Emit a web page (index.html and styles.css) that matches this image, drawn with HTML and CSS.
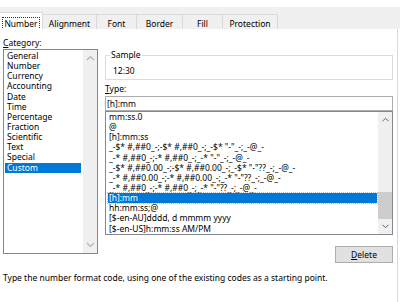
FILE: index.html
```html
<!DOCTYPE html>
<html lang="en">
<head>
  <meta charset="UTF-8">
  <title>Format Cells</title>
  <link rel="stylesheet" href="styles.css">
</head>
<body>
  <div class="dialog">
    <div class="tabs">
      <div class="tab active"><span class="focus">Number</span></div>
      <div class="tab">Alignment</div>
      <div class="tab">Font</div>
      <div class="tab">Border</div>
      <div class="tab">Fill</div>
      <div class="tab">Protection</div>
    </div>

    <div class="panel">
      <div class="columns">
        <div class="left">
          <div class="label"><u>C</u>ategory:</div>
          <div class="listbox category">
            <ul class="items">
              <li>General</li>
              <li>Number</li>
              <li>Currency</li>
              <li>Accounting</li>
              <li>Date</li>
              <li>Time</li>
              <li>Percentage</li>
              <li>Fraction</li>
              <li>Scientific</li>
              <li>Text</li>
              <li>Special</li>
              <li class="selected">Custom</li>
            </ul>
            <div class="scrollbar light">
              <svg class="arrow" width="9" height="6" viewBox="0 0 9 6"><path d="M1 5 L4.5 1.5 L8 5" fill="none" stroke="currentColor" stroke-width="1.2"/></svg>
              <div class="track"></div>
              <svg class="arrow" width="9" height="6" viewBox="0 0 9 6"><path d="M1 1 L4.5 4.5 L8 1" fill="none" stroke="currentColor" stroke-width="1.2"/></svg>
            </div>
          </div>
        </div>

        <div class="right">
          <fieldset class="sample">
            <legend>Sample</legend>
            <div class="sample-value">12:30</div>
          </fieldset>

          <div class="label"><u>T</u>ype:</div>
          <div class="type-input">[h]:mm</div>
          <div class="listbox codes">
            <ul class="items">
              <li>mm:ss.0</li>
              <li>@</li>
              <li>[h]:mm:ss</li>
              <li>_-$* #,##0_-;-$* #,##0_-;_-$* "-"_-;_-@_-</li>
              <li>_-* #,##0_-;-* #,##0_-;_-* "-"_-;_-@_-</li>
              <li>_-$* #,##0.00_-;-$* #,##0.00_-;_-$* "-"??_-;_-@_-</li>
              <li>_-* #,##0.00_-;-* #,##0.00_-;_-* "-"??_-;_-@_-</li>
              <li>_-* #,##0_-;-* #,##0_-;_-* "-"??_-;_-@_-</li>
              <li class="selected"><span class="focus">[h]:mm</span></li>
              <li>hh:mm:ss;@</li>
              <li>[$-en-AU]dddd, d mmmm yyyy</li>
              <li>[$-en-US]h:mm:ss AM/PM</li>
            </ul>
            <div class="scrollbar">
              <svg class="arrow" width="9" height="6" viewBox="0 0 9 6"><path d="M1 5 L4.5 1.5 L8 5" fill="none" stroke="currentColor" stroke-width="1.2"/></svg>
              <div class="track"><div class="thumb"></div></div>
              <svg class="arrow" width="9" height="6" viewBox="0 0 9 6"><path d="M1 1 L4.5 4.5 L8 1" fill="none" stroke="currentColor" stroke-width="1.2"/></svg>
            </div>
          </div>

          <div class="actions">
            <button class="btn"><u>D</u>elete</button>
          </div>
        </div>
      </div>

      <p class="hint">Type the number format code, using one of the existing codes as a starting point.</p>
    </div>
  </div>
</body>
</html>
```

FILE: styles.css
```css
body {
  margin: 0;
  background-color: white;
  font-family: "Noto Sans", sans-serif;
  font-size: 8.5px;
  color: #000;
}
.dialog {
  width: 400px;
  height: 302px;
  padding-top: 7px;
  box-sizing: border-box;
  display: flex;
  flex-direction: column;
}
.tabs {
  display: flex;
  align-items: flex-end;
  height: 22px;
  background-color: #f0f0f0;
}
.tab {
  height: 15px;
  padding: 2px 8px 0;
  display: flex;
  align-items: center;
  justify-content: center;
  border: 1px solid #d9d9d9;
  border-bottom: none;
  border-left: none;
  box-sizing: border-box;
}
.tab:nth-child(2) { width: 54px; }
.tab:nth-child(3) { width: 40px; }
.tab:nth-child(4) { width: 46px; }
.tab:nth-child(5) { width: 40px; }
.tab:nth-child(6) { width: 55px; }
.tab.active {
  width: 43px;
  height: 17px;
  padding-top: 4px;
  background-color: white;
}
.focus {
  outline: 1px dotted #333;
  outline-offset: 0;
  padding: 0 1px;
}
.panel {
  flex: 1;
  width: 398px;
  background-color: white;
  border-right: 1px solid #d9d9d9;
  box-sizing: border-box;
  padding: 8px 4px 0 3px;
}
.columns {
  display: flex;
  gap: 7px;
}
.left {
  width: 95px;
}
.right {
  width: 288px;
  padding-top: 12px;
}
.label {
  height: 12px;
  line-height: 12px;
}
.listbox {
  display: flex;
  border: 1px solid #828790;
  box-sizing: border-box;
  background-color: white;
}
.items {
  list-style: none;
  margin: 0;
  padding: 1px 1px 0;
  flex: 1;
  white-space: nowrap;
  overflow: hidden;
}
.items li {
  height: 10.15px;
  line-height: 10.15px;
  padding-left: 2px;
}
.items li.selected {
  background-color: #0078d7;
  color: white;
}
.category {
  height: 205px;
}
.category .items li.selected {
  margin-right: 1px;
}
.scrollbar {
  width: 14px;
  display: flex;
  flex-direction: column;
  align-items: center;
  background-color: #f0f0f0;
  color: #606060;
}
.scrollbar.light {
  color: #b4b4b4;
}
.arrow {
  margin: 5px 0;
}
.track {
  flex: 1;
  width: 100%;
  display: flex;
  flex-direction: column;
}
.thumb {
  margin-top: 65px;
  height: 27px;
  background-color: #cdcdcd;
}
.sample {
  margin: 0;
  padding: 0 7px 3px;
  border: 1px solid #dcdcdc;
  height: 31px;
  box-sizing: border-box;
}
.sample legend {
  padding: 0 1px;
  margin-left: -3px;
  line-height: 12px;
}
.sample-value {
  line-height: 12px;
  margin-top: 4px;
}
.right .label {
  margin-top: 3px;
}
.type-input {
  height: 15px;
  line-height: 13px;
  border: 1px solid #adadad;
  box-sizing: border-box;
  padding-left: 1px;
  margin-top: 1px;
}
.codes {
  height: 124px;
}
.codes .items {
  padding-top: 0;
}
.codes .items li.selected {
  padding-left: 0;
  margin-left: 1px;
}
.codes .items li.selected .focus {
  display: block;
  outline-color: #9cc8ef;
  padding-left: 1px;
}
.actions {
  display: flex;
  justify-content: flex-end;
  margin-top: 11px;
}
.btn {
  width: 58px;
  height: 17px;
  font-family: inherit;
  font-size: 8.5px;
  background-color: #e1e1e1;
  border: 1px solid #adadad;
  padding: 0;
  color: #000;
}
.hint {
  margin: 9px 0 0;
  line-height: 12px;
}
```
